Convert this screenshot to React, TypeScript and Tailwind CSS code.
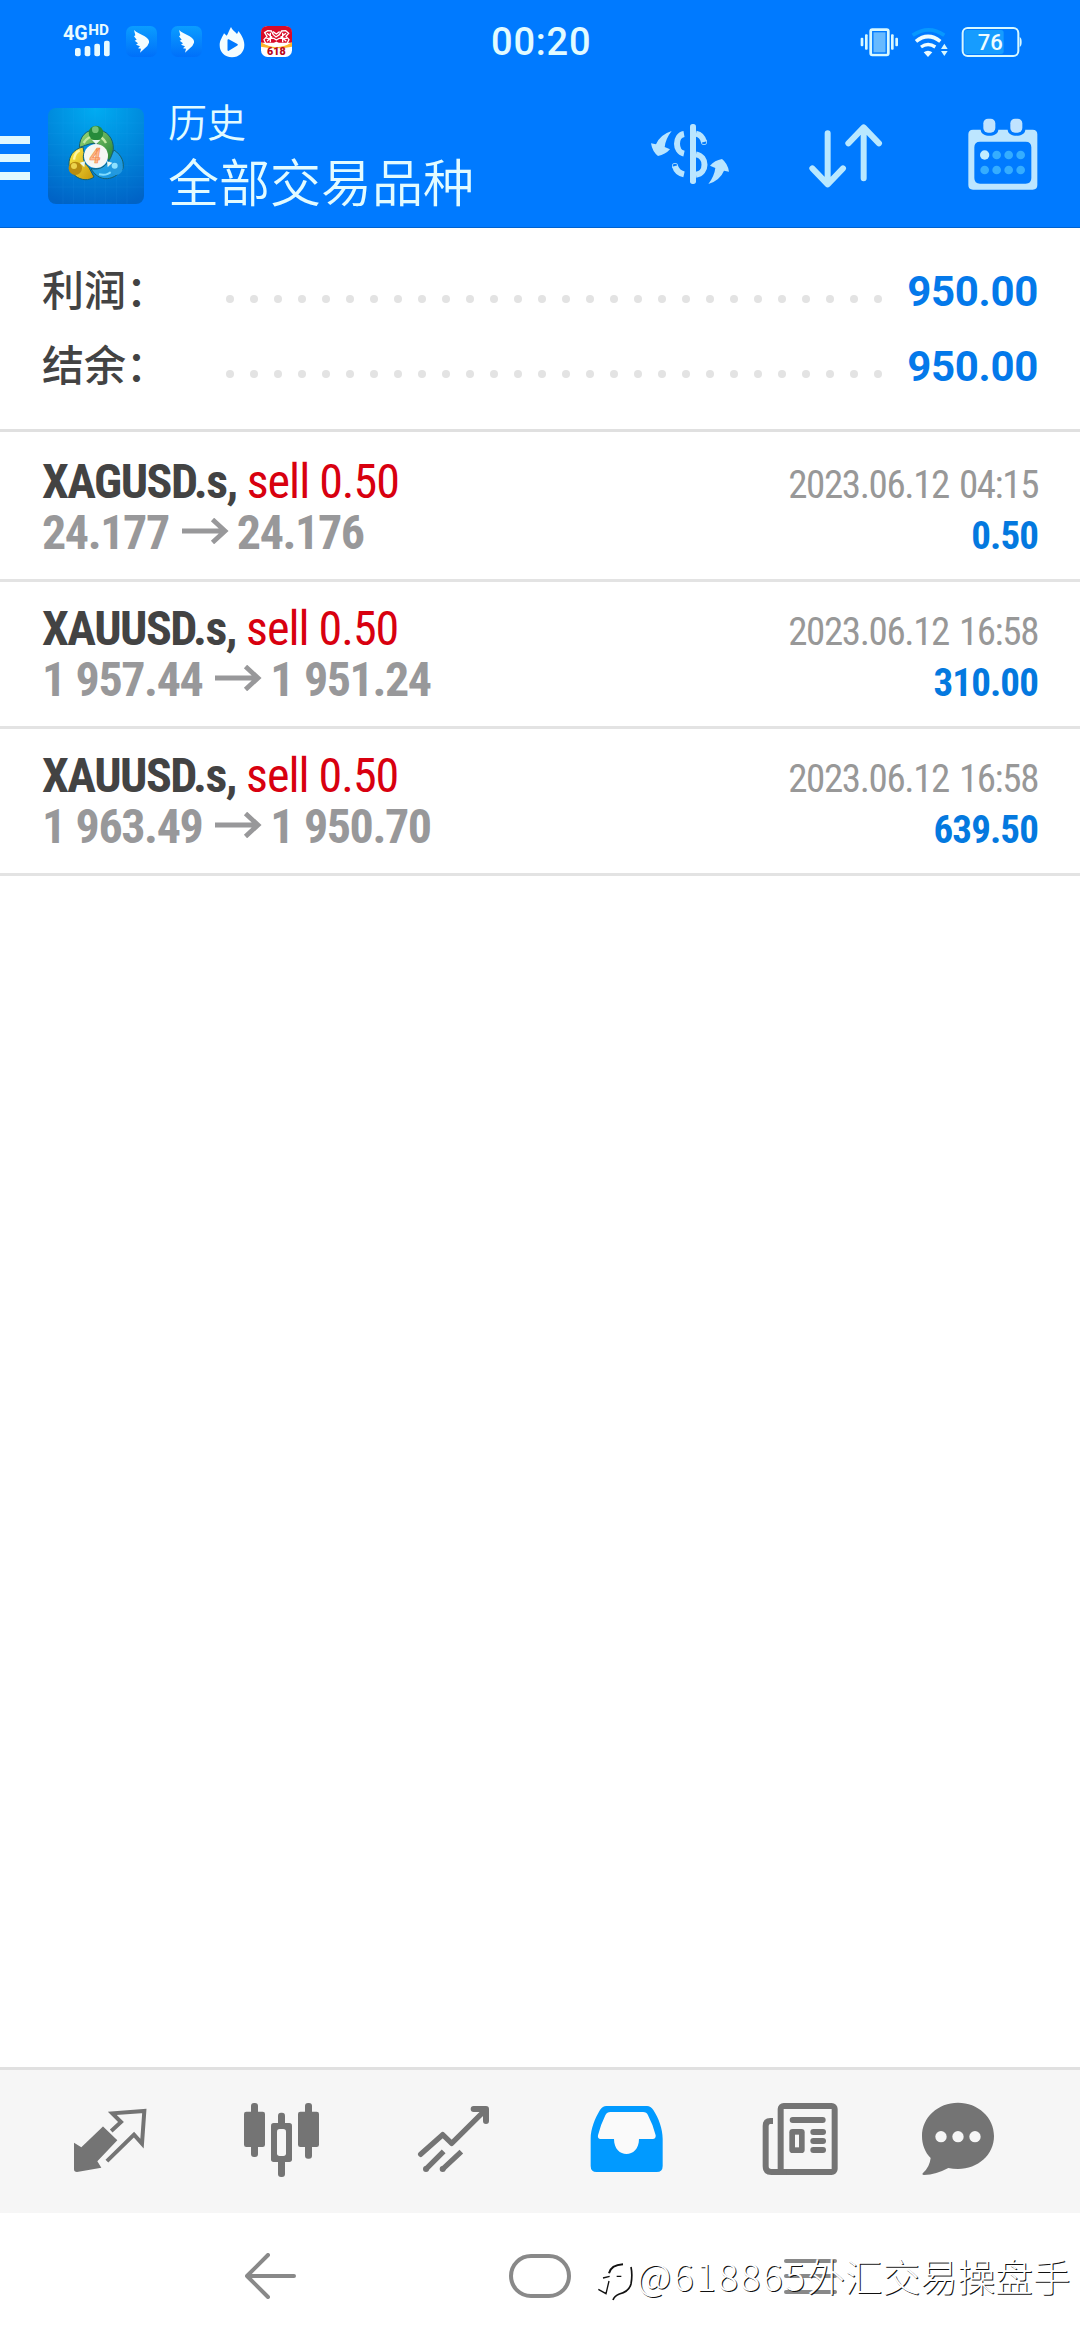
import type { ReactNode } from "react";

type Deal = {
    symbol: string;
    side: string;
    open: string;
    close: string;
    time: string;
    profit: string;
};

const deals: Deal[] = [
    { symbol: "XAGUSD.s,", side: "sell 0.50", open: "24.177", close: "24.176", time: "2023.06.12 04:15", profit: "0.50" },
    { symbol: "XAUUSD.s,", side: "sell 0.50", open: "1 957.44", close: "1 951.24", time: "2023.06.12 16:58", profit: "310.00" },
    { symbol: "XAUUSD.s,", side: "sell 0.50", open: "1 963.49", close: "1 950.70", time: "2023.06.12 16:58", profit: "639.50" },
];

const WingIcon = () => (
    <svg width="31" height="31" viewBox="0 0 93 93">
        <defs>
            <linearGradient id="wing" x1="0" y1="0" x2="0" y2="1">
                <stop offset="0" stopColor="#0a9dff" />
                <stop offset="1" stopColor="#0070fa" />
            </linearGradient>
        </defs>
        <rect width="93" height="93" rx="20" fill="url(#wing)" />
        <path
            d="M24 12C31 20 45 24 56 31C65 37 71 43 69 50L64 60L55 68L42 80L45 68L36 67L42 61L30 56L36 52L26 44L32 41L24 31L28 28Z"
            fill="#f4fdff"
        />
    </svg>
);

const StatusBar = () => (
    <div className="flex h-[84px] items-start pt-[24px]">
        <svg width="48" height="34" viewBox="0 0 144 102" className="ml-[63px] overflow-visible">
            <g fill="#e8fbff" fontFamily="Roboto, sans-serif" fontWeight="700">
                <text x="0" y="48" fontSize="63" textLength="74" lengthAdjust="spacingAndGlyphs">4G</text>
                <text x="76" y="33" fontSize="42" textLength="62" lengthAdjust="spacingAndGlyphs">HD</text>
                <rect x="36" y="72" width="17" height="25" rx="6" />
                <rect x="65" y="66" width="17" height="31" rx="6" />
                <rect x="94" y="59" width="17" height="38" rx="6" />
                <rect x="123" y="50" width="17" height="47" rx="6" />
            </g>
        </svg>
        <div className="ml-[15px] mt-[2px] flex gap-[14px]">
            <WingIcon />
            <WingIcon />
        </div>
        <svg width="26" height="32" viewBox="0 0 78 96" className="ml-[17px] mt-[2px]">
            <path
                d="M36 3C39 13 48 16 54 24L59 15C65 26 76 38 76 57C76 79 60 94 39 94C17 94 2 78 2 58C2 43 10 34 15 22L23 29C28 23 30 13 36 3Z"
                fill="#f4fdff"
            />
            <path d="M28 42L54 56L28 72Z" fill="#007aff" stroke="#007aff" strokeWidth="5" strokeLinejoin="round" />
        </svg>
        <svg width="31" height="31" viewBox="0 0 93 93" className="ml-[16px] mt-[2px]">
            <rect width="93" height="93" rx="20" fill="#fff" />
            <path d="M0 50V20Q0 0 20 0H73Q93 0 93 20V50Z" fill="#d80b28" />
            <path d="M0 49Q46 78 93 49V62Q46 72 0 62Z" fill="#ffb52d" />
            <g fill="none" stroke="#fff" strokeWidth="4">
                <path d="M11 20L20 14L31 15L37 26L45 33L55 26L62 15L74 14L83 22L75 31L84 41L77 55L61 58L46 49L31 58L15 54L9 41L18 31Z" />
                <path d="M18 22L32 33L18 46M75 22L60 33L76 46M28 20V49M65 20V49M37 36L46 42L56 36M36 17L46 24L56 17M16 37H37M56 37H78" />
            </g>
            <text x="18" y="87" fontSize="31" fontWeight="900" fontFamily="Roboto, sans-serif" fill="#b80720" textLength="56" lengthAdjust="spacingAndGlyphs">618</text>
        </svg>
        <div className="ml-[199px] w-[100px] text-[38px] leading-[37px] font-medium tracking-[0.8px] text-[#e2fbff]">00:20</div>
        <svg width="40" height="30" viewBox="0 0 120 90" className="ml-[269px] mt-[3px]">
            <g fill="#d8f8ff">
                <rect x="2" y="32" width="8" height="26" rx="3" />
                <rect x="15" y="22" width="8" height="46" rx="3" />
                <rect x="93" y="22" width="8" height="46" rx="3" />
                <rect x="106" y="32" width="8" height="26" rx="3" />
            </g>
            <rect x="32" y="8" width="53" height="76" rx="5" fill="#67baff" stroke="#d8f8ff" strokeWidth="8" />
            <rect x="38.500" y="14" width="40" height="64" fill="none" stroke="#007aff" strokeWidth="4" />
        </svg>
        <svg width="40" height="32" viewBox="0 0 120 96" className="ml-[10px] mt-[3px]">
            <g fill="none">
                <path d="M8 25Q56-8 103 25" stroke="#0798ff" strokeWidth="11" />
                <path d="M18 43Q54 14 91 43" stroke="#edfcff" strokeWidth="11" />
                <path d="M33 60Q54 45 76 60" stroke="#edfcff" strokeWidth="10" />
            </g>
            <path d="M41 76Q54 66 67 76L54 90Z" fill="#edfcff" />
            <path d="M93 66L103 50L113 66ZM93 72H113L103 87Z" fill="#d8f8ff" />
        </svg>
        <svg width="62" height="32" viewBox="0 0 186 96" className="ml-[11px] mt-[2px]">
            <rect x="5" y="6" width="167" height="84" rx="15" fill="#007aff" stroke="#d8f8ff" strokeWidth="6" />
            <rect x="10" y="12" width="118" height="72" rx="8" fill="#169cff" />
            <path d="M176 33Q182 36 182 48Q182 60 176 63Z" fill="#d8f8ff" />
            <text x="50" y="72" fontSize="66" fontWeight="500" fontFamily="Roboto, sans-serif" fill="#effcff">76</text>
        </svg>
    </div>
);

const AppLogo = () => (
    <svg width="96" height="96" viewBox="0 0 288 288">
        <defs>
            <radialGradient id="logoBg" cx="0.5" cy="0" r="1.05">
                <stop offset="0" stopColor="#00acf2" />
                <stop offset="0.500" stopColor="#0089dc" />
                <stop offset="1" stopColor="#0063c6" />
            </radialGradient>
            <linearGradient id="green" x1="0" y1="0" x2="1" y2="1">
                <stop offset="0" stopColor="#9fdb78" />
                <stop offset="1" stopColor="#1e7f35" />
            </linearGradient>
            <linearGradient id="yellow" x1="0" y1="0" x2="1" y2="1">
                <stop offset="0" stopColor="#fff04a" />
                <stop offset="1" stopColor="#c79508" />
            </linearGradient>
            <linearGradient id="sky" x1="0" y1="0" x2="1" y2="1">
                <stop offset="0" stopColor="#2bb0ee" />
                <stop offset="1" stopColor="#178fdc" />
            </linearGradient>
        </defs>
        <rect width="288" height="288" rx="24" fill="url(#logoBg)" />
        <path
            d="M45 0V288M77 0V288M109 0V288M141 0V288M173 0V288M205 0V288M237 0V288M0 45H288M0 77H288M0 109H288M0 141H288M0 173H288M0 205H288M0 237H288"
            stroke="#38b8ff"
            strokeOpacity="0.13"
            strokeWidth="2"
        />
        <g stroke="#17606b" strokeWidth="3">
            <path d="M94 118C95 85 114 65 144 65C176 65 198 91 196 124L187 162L169 142C168 116 151 105 135 106C118 108 105 116 94 118Z" fill="url(#green)" />
            <path d="M105 117C76 123 62 145 63 171L80 202C99 219 124 218 138 207L122 177C107 166 103 149 108 134Z" fill="url(#yellow)" />
            <path d="M198 126C222 142 230 165 224 184L205 202C178 220 147 214 129 182C146 185 163 182 175 168C190 153 190 140 198 126Z" fill="url(#sky)" />
        </g>
        <path d="M107 105Q122 82 144 84Q164 85 174 105" fill="none" stroke="#c5e8a3" strokeWidth="7" />
        <path d="M78 155Q80 134 95 127" fill="none" stroke="#fff7a0" strokeWidth="7" />
        <path d="M153 199Q178 204 190 190" fill="none" stroke="#81dcff" strokeWidth="6" />
        <circle cx="144" cy="75" r="22" fill="#268b3a" />
        <circle cx="142" cy="65" r="10" fill="#73c278" />
        <circle cx="82" cy="181" r="20" fill="#b88c10" />
        <circle cx="78" cy="174" r="9" fill="#ecd34e" />
        <circle cx="204" cy="181" r="20" fill="#2399df" />
        <circle cx="200" cy="173" r="9" fill="#8de1ff" />
        <path d="M132 96L144 109L157 96ZM95 164L111 160L109 178ZM193 164L177 160L179 178Z" fill="#e9f8f0" />
        <circle cx="144" cy="144" r="36" fill="#f5f7f3" />
        <text x="125" y="165" fontSize="58" fontWeight="700" fontStyle="italic" fontFamily="Roboto, sans-serif" fill="#ffb98e" stroke="#f38a4b" strokeWidth="2">4</text>
    </svg>
);

const Header = () => (
    <div className="flex h-[144px] items-start border-b border-[#0062cf]">
        <div className="mt-[52px] flex w-[30px] flex-col gap-[10px]">
            <div className="h-2 bg-[#e0f9ff]" />
            <div className="h-2 bg-[#e0f9ff]" />
            <div className="h-2 bg-[#e0f9ff]" />
        </div>
        <div className="mt-6 ml-[18px]">
            <AppLogo />
        </div>
        <div className="mt-[12px] ml-6 w-[483px] font-['Noto_Sans_CJK_SC',sans-serif] font-[350] text-[#e2fbff]">
            <div className="text-[39px] leading-[48px]">历史</div>
            <div className="mt-[3px] text-[51px] leading-[66px]">全部交易品种</div>
        </div>
        <svg width="78" height="60" viewBox="873 372 234 180" className="mt-10 text-[#b9e5ff]">
            <g fill="currentColor">
                <rect x="990" y="372" width="18" height="180" rx="8" />
                <path d="M873 430L888 433Q900 404 935 393Q917 416 914 441L930 448Q916 464 894 468Q877 455 873 430Z" />
                <path d="M1107 515L1092 512Q1080 541 1045 552Q1063 529 1066 504L1050 497Q1064 481 1086 477Q1103 490 1107 515Z" />
            </g>
            <g fill="none" stroke="currentColor" strokeWidth="18">
                <path d="M972 402C944 407 944 455 972 461" />
                <path d="M1008 401Q1027 405 1032 426" />
                <circle cx="1032" cy="426" r="1" strokeWidth="16" />
                <path d="M1008 463C1042 469 1042 520 1008 524" />
                <path d="M972 523Q950 518 945 498" />
                <circle cx="945" cy="498" r="1" strokeWidth="16" />
            </g>
        </svg>
        <svg width="74" height="64" viewBox="268 371 222 192" className="mt-10 ml-20">
            <g fill="none" stroke="#b9e8ff" strokeWidth="18" strokeLinecap="round" strokeLinejoin="round">
                <path d="M324 399V550M278 504L324 552L370 504" />
                <path d="M432 534V384M386 429L432 381L478 429" />
            </g>
        </svg>
        <svg width="70" height="72" viewBox="743 355 210 216" className="mt-[34px] ml-[85px]">
            <rect x="753" y="408" width="189" height="153" rx="8" fill="#007aff" />
            <path
                fillRule="evenodd"
                d="M758 390H781C782 414 833 414 834 390H862C863 414 914 414 915 390H937Q951 390 951 404V556Q951 570 937 570H758Q744 570 744 556V404Q744 390 758 390ZM779 426Q762 426 762 443V535Q762 552 779 552H916Q933 552 933 535V443Q933 426 916 426Z"
                fill="#bde6ff"
            />
            <rect x="789" y="357" width="36" height="42" rx="14" fill="#c0e3ff" />
            <rect x="870" y="357" width="36" height="42" rx="14" fill="#c0e3ff" />
            <circle cx="793" cy="466" r="14" fill="#c0ecff" />
            <g fill="#35adff">
                <circle cx="829" cy="466" r="13" />
                <circle cx="865" cy="466" r="13" />
                <circle cx="901" cy="466" r="13" />
                <circle cx="793" cy="511" r="13" />
                <circle cx="829" cy="511" r="13" />
                <circle cx="865" cy="511" r="13" />
                <circle cx="901" cy="511" r="13" />
            </g>
        </svg>
    </div>
);

const SummaryRow = ({ label, value }: { label: string; value: string }) => (
    <div className="flex h-[75px] items-center">
        <div className="mb-2 w-[184px] font-['Noto_Sans_CJK_SC',sans-serif] text-[42px] leading-[60px] font-medium text-[#434343]">{label}</div>
        <div className="mt-[15px] flex w-[656px] justify-between">
            {Array.from({ length: 28 }, (_, i) => (
                <div key={i} className="size-2 rounded-full bg-[#e3e3e3]" />
            ))}
        </div>
        <div className="ml-auto text-[42px] leading-[60px] font-bold tracking-[-0.3px] text-[#0479ea]">{value}</div>
    </div>
);

const DealRow = ({ deal }: { deal: Deal }) => (
    <div className="flex h-[147px] justify-between border-b-[3px] border-[#e3e3e3] px-[42px] pt-[21px] font-['Roboto_Condensed',Roboto,sans-serif] font-stretch-condensed">
        <div className="text-[48px] leading-[51px]">
            <div className="whitespace-pre">
                <span className="font-bold tracking-[-1.5px] text-[#434343]">{deal.symbol}</span>
                <span className="tracking-[-1px] text-[#d8000f]"> {deal.side}</span>
            </div>
            <div className="flex items-center font-bold tracking-[-1.4px] text-[#98989a] [word-spacing:1px]">
                <span>{deal.open}</span>
                <svg width="47" height="26" viewBox="0 0 47 26" className="mr-[8px] mb-1 ml-[13px]">
                    <path d="M0 13H43M30.500 1.500L43 13L30.500 24.500" fill="none" stroke="currentColor" strokeWidth="4.800" />
                </svg>
                <span>{deal.close}</span>
            </div>
        </div>
        <div className="pt-[4px] text-right text-[39px] leading-[51px]">
            <div className="tracking-[-1.4px] text-[#989898] [word-spacing:2.5px]">{deal.time}</div>
            <div className="font-bold tracking-[-0.9px] text-[#0479df]">{deal.profit}</div>
        </div>
    </div>
);

const TabIcon = ({ viewBox, className = "", children }: { viewBox: string; className?: string; children: ReactNode }) => (
    <svg width="84" height="84" viewBox={viewBox} className={`shrink-0 text-[#747474] ${className}`}>
        {children}
    </svg>
);

const TabBar = () => (
    <div className="flex h-[146px] gap-[88px] border-t-[3px] border-[#e0e0e0] bg-[#f6f6f6] pt-[28px] pl-[68px]">
        {/* quotes */}
        <TabIcon viewBox="204 144 252 252">
            <path d="M310 230L352 271L292 334L304 353L231 366Q222 366 222 358V278L244 292L305 233Q309 229 310 230Z" fill="currentColor" />
            <path d="M338 239L363 216L337 190L433 183L426 281L402 254L325 329" fill="none" stroke="currentColor" strokeWidth="12" strokeLinecap="square" />
        </TabIcon>
        {/* charts */}
        <TabIcon viewBox="720 144 252 252">
            <g fill="currentColor">
                <rect x="753" y="159" width="21" height="162" rx="9" />
                <rect x="732" y="185" width="63" height="106" rx="7" />
                <rect x="915" y="159" width="21" height="167" rx="9" />
                <rect x="894" y="185" width="63" height="106" rx="7" />
                <rect x="834" y="188" width="21" height="193" rx="9" />
                <rect x="813" y="219" width="63" height="117" rx="8" />
            </g>
            <rect x="831" y="237" width="27" height="81" rx="8" fill="#f6f6f6" />
        </TabIcon>
        {/* trade */}
        <TabIcon viewBox="156 144 252 252">
            <g fill="none" stroke="currentColor" strokeWidth="16" strokeLinejoin="round">
                <path d="M182 313L248 254L275 280L374 182" strokeLinecap="round" />
                <path d="M341 177H378V213" strokeWidth="18" strokeLinecap="round" />
                <path d="M197 358L251 304M247 358L304 305" />
            </g>
            <circle cx="198" cy="357" r="9" fill="currentColor" />
            <circle cx="248" cy="357" r="9" fill="currentColor" />
        </TabIcon>
        {/* history, the active tab */}
        <TabIcon viewBox="675 144 252 252" className="ml-[1px]">
            <path
                d="M739 168H861Q872 168 880 180C896 204 908 238 908 266V348Q908 366 890 366H710Q692 366 692 348V266C692 238 705 204 720 180Q728 168 739 168Z"
                fill="#019aff"
            />
            <path d="M751 186H849Q860 186 864 196Q879 224 887 256Q888 267 878 267H837C837 327 762 327 762 267H722Q712 267 714 256Q722 224 736 196Q741 186 751 186Z" fill="#fafafa" />
        </TabIcon>
        {/* news */}
        <TabIcon viewBox="114 144 252 252" className="ml-[1px]">
            <rect x="182" y="168" width="162" height="198" rx="9" fill="none" stroke="currentColor" strokeWidth="18" />
            <path d="M159 213H151Q137 213 137 228V349Q137 366 154 366H200" fill="none" stroke="currentColor" strokeWidth="18" />
            <g fill="currentColor">
                <rect x="209" y="201" width="108" height="18" rx="9" />
                <rect x="271" y="237" width="47" height="18" rx="9" />
                <rect x="271" y="264" width="47" height="18" rx="9" />
                <rect x="271" y="291" width="47" height="18" rx="9" />
                <rect x="208" y="237" width="46" height="72" rx="10" />
            </g>
            <rect x="225" y="254" width="12" height="38" fill="#f6f6f6" />
        </TabIcon>
        {/* messages */}
        <TabIcon viewBox="588 144 252 252" className="-ml-[14px]">
            <path d="M714 158C774 158 822 202 822 258C822 314 774 357 714 357Q699 357 685 354Q648 374 612 375Q604 374 609 369Q629 351 632 324C615 307 606 284 606 258C606 202 654 158 714 158Z" fill="currentColor" />
            <g fill="#f6f6f6">
                <circle cx="663" cy="260" r="17" />
                <circle cx="714" cy="260" r="17" />
                <circle cx="765" cy="260" r="17" />
            </g>
        </TabIcon>
    </div>
);

const SystemNav = () => (
    <div className="relative flex h-[127px] items-center bg-white pb-[1px]">
        <svg width="51" height="46" viewBox="0 0 51 46" className="ml-[245px]">
            <path d="M23 2L2 23L23 44M2 23H49" fill="none" stroke="#898989" strokeWidth="4" strokeLinecap="round" strokeLinejoin="round" />
        </svg>
        <div className="ml-[213px] h-[44px] w-[62px] rounded-full border-4 border-[#898989]" />
        <div className="ml-[213px] flex w-[53px] flex-col gap-[11.5px]">
            <div className="h-1 rounded-full bg-[#898989]" />
            <div className="h-1 rounded-full bg-[#898989]" />
            <div className="h-1 rounded-full bg-[#898989]" />
        </div>
        {/* watermark lies over the system buttons */}
        <div className="absolute top-[37px] left-[597px] flex items-start">
            <svg width="38" height="44" viewBox="0 0 114 132" className="mt-[11px]">
                <g fill="none" stroke="#111" strokeWidth="4">
                    <path d="M36 37Q42 12 78 10" strokeWidth="6" />
                    <path d="M102 18Q107 42 102 69Q96 92 67 99Q52 105 48 117" strokeWidth="5" />
                    <path d="M18 51L38 46M59 46H73M36 60L27 98L4 85" />
                </g>
            </svg>
            <div className="ml-[2px] font-['Noto_Sans_CJK_SC',sans-serif] text-[37.6px] leading-[50px] font-light whitespace-nowrap text-white [text-shadow:1px_1px_0_#111]">
                <span className="tracking-[2.2px]">@618865</span>外汇交易操盘手
            </div>
        </div>
    </div>
);

const App = () => {
    return (
        <div className="flex h-[2340px] w-[1080px] flex-col overflow-hidden bg-white font-['Roboto',sans-serif]">
            <div className="bg-[#007aff]">
                <StatusBar />
                <Header />
            </div>
            <div className="h-[204px] border-b-[3px] border-[#e0e0e0] pt-[26px] pr-[42px] pl-[42px]">
                <SummaryRow label="利润：" value="950.00" />
                <SummaryRow label="结余：" value="950.00" />
            </div>
            <div className="flex-1 pt-[3px]">
                {deals.map((deal, i) => (
                    <DealRow key={i} deal={deal} />
                ))}
            </div>
            <TabBar />
            <SystemNav />
        </div>
    );
};

export default App;
